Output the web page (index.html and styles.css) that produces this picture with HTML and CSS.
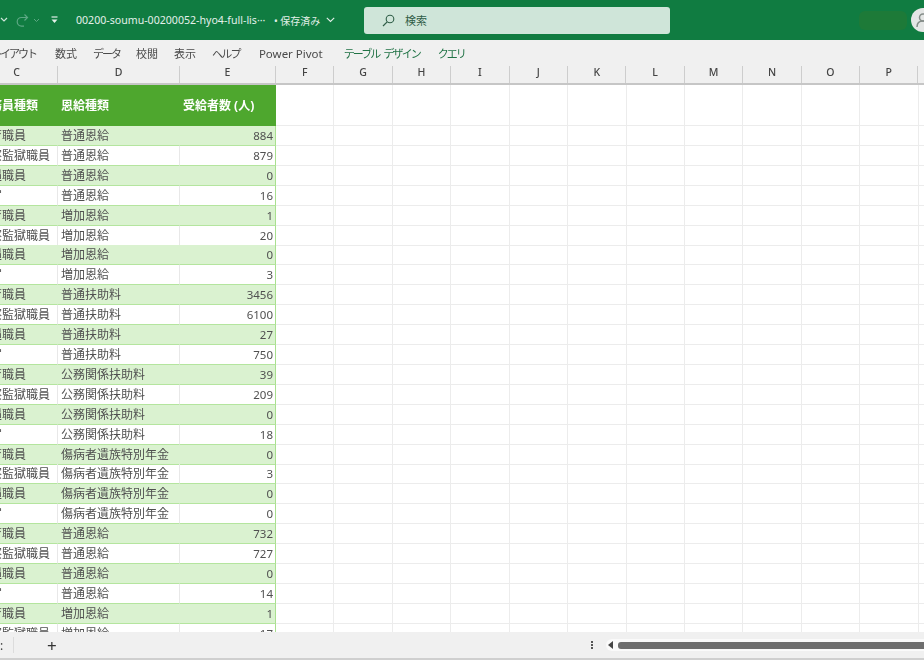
FILE: index.html
```html
<!DOCTYPE html>
<html lang="ja">
<head>
    <meta charset="UTF-8">
    <meta name="viewport" content="width=device-width, initial-scale=1.0">
    <title>00200-soumu-00200052-hyo4-full-list</title>
    <link rel="stylesheet" href="styles.css">
</head>
<body>
<div class="app">
    <!-- Title bar -->
    <header class="titlebar">
        <div class="qat">
            <svg class="chev-left" width="8" height="6" viewBox="0 0 8 6"><path d="M1 1l3 3 3-3" fill="none" stroke="#cfe5d9" stroke-width="1.2"/></svg>
            <svg class="redo" width="14" height="14" viewBox="0 0 14 14"><path d="M9.500 1.500l3 3-3 3M12 4.500H6.500a4.300 4.300 0 0 0 0 8.600H9" fill="none" stroke="#5da884" stroke-width="1.200"/></svg>
            <svg class="chev-mid" width="7" height="5" viewBox="0 0 7 5"><path d="M1 1l2.500 2.500L6 1" fill="none" stroke="#5da884" stroke-width="1"/></svg>
            <svg class="qat-more" width="7" height="8" viewBox="0 0 7 8"><path d="M.5 1h6" stroke="#e3f0e9" stroke-width="1.200"/><path d="M.5 3.500h6l-3 3.500z" fill="#e3f0e9"/></svg>
        </div>
        <div class="doc-name">00200-soumu-00200052-hyo4-full-lis···</div>
        <div class="saved">• 保存済み</div>
        <svg class="saved-chev" width="9" height="6" viewBox="0 0 9 6"><path d="M.8.800l3.700 3.700L8.200.800" fill="none" stroke="#e3f0e9" stroke-width="1.100"/></svg>
        <div class="search">
            <svg width="13" height="13" viewBox="0 0 13 13"><circle cx="8" cy="5" r="3.800" fill="none" stroke="#2f5d47" stroke-width="1.100"/><path d="M5.200 7.800L1 12" stroke="#2f5d47" stroke-width="1.200"/></svg>
            <span>検索</span>
        </div>
        <div class="blob"></div>
        <div class="avatar">
            <svg width="24" height="24" viewBox="0 0 24 24"><circle cx="12" cy="9.500" r="3.500" fill="none" stroke="#858d89" stroke-width="1.500"/><path d="M6 19c0-4 2.500-6 6-6s6 2 6 6" fill="none" stroke="#858d89" stroke-width="1.500"/></svg>
        </div>
    </header>

    <!-- Ribbon tabs -->
    <nav class="tabs">
        <span class="tab tab-cut kana">レイアウト</span>
        <span class="tab">数式</span>
        <span class="tab kana">データ</span>
        <span class="tab">校閲</span>
        <span class="tab">表示</span>
        <span class="tab kana-help">ヘルプ</span>
        <span class="tab tab-wide">Power Pivot</span>
        <span class="tab tab-green kana-design">テーブル デザイン</span>
        <span class="tab tab-green kana">クエリ</span>
    </nav>

    <!-- Column letters -->
    <div class="col-heads">
        <div>C</div><div>D</div><div>E</div><div>F</div><div>G</div><div>H</div><div>I</div><div>J</div><div>K</div><div>L</div><div>M</div><div>N</div><div>O</div><div>P</div><div></div>
    </div>

    <!-- Sheet -->
    <main class="sheet">
        <div class="row row-head"><div class="cell">公務員種類</div><div class="cell">恩給種類</div><div class="cell num">受給者数 (人)</div><div class="blank"></div></div>
        <div class="row band"><div class="cell">教育職員</div><div class="cell">普通恩給</div><div class="cell num">884</div><div class="blank"></div></div>
        <div class="row"><div class="cell">警察監獄職員</div><div class="cell">普通恩給</div><div class="cell num">879</div><div class="blank"></div></div>
        <div class="row band"><div class="cell">待遇職員</div><div class="cell">普通恩給</div><div class="cell num">0</div><div class="blank"></div></div>
        <div class="row"><div class="cell">文官</div><div class="cell">普通恩給</div><div class="cell num">16</div><div class="blank"></div></div>
        <div class="row band"><div class="cell">教育職員</div><div class="cell">増加恩給</div><div class="cell num">1</div><div class="blank"></div></div>
        <div class="row"><div class="cell">警察監獄職員</div><div class="cell">増加恩給</div><div class="cell num">20</div><div class="blank"></div></div>
        <div class="row band"><div class="cell">待遇職員</div><div class="cell">増加恩給</div><div class="cell num">0</div><div class="blank"></div></div>
        <div class="row"><div class="cell">文官</div><div class="cell">増加恩給</div><div class="cell num">3</div><div class="blank"></div></div>
        <div class="row band"><div class="cell">教育職員</div><div class="cell">普通扶助料</div><div class="cell num">3456</div><div class="blank"></div></div>
        <div class="row"><div class="cell">警察監獄職員</div><div class="cell">普通扶助料</div><div class="cell num">6100</div><div class="blank"></div></div>
        <div class="row band"><div class="cell">待遇職員</div><div class="cell">普通扶助料</div><div class="cell num">27</div><div class="blank"></div></div>
        <div class="row"><div class="cell">文官</div><div class="cell">普通扶助料</div><div class="cell num">750</div><div class="blank"></div></div>
        <div class="row band"><div class="cell">教育職員</div><div class="cell">公務関係扶助料</div><div class="cell num">39</div><div class="blank"></div></div>
        <div class="row"><div class="cell">警察監獄職員</div><div class="cell">公務関係扶助料</div><div class="cell num">209</div><div class="blank"></div></div>
        <div class="row band"><div class="cell">待遇職員</div><div class="cell">公務関係扶助料</div><div class="cell num">0</div><div class="blank"></div></div>
        <div class="row"><div class="cell">文官</div><div class="cell">公務関係扶助料</div><div class="cell num">18</div><div class="blank"></div></div>
        <div class="row band"><div class="cell">教育職員</div><div class="cell">傷病者遺族特別年金</div><div class="cell num">0</div><div class="blank"></div></div>
        <div class="row"><div class="cell">警察監獄職員</div><div class="cell">傷病者遺族特別年金</div><div class="cell num">3</div><div class="blank"></div></div>
        <div class="row band"><div class="cell">待遇職員</div><div class="cell">傷病者遺族特別年金</div><div class="cell num">0</div><div class="blank"></div></div>
        <div class="row"><div class="cell">文官</div><div class="cell">傷病者遺族特別年金</div><div class="cell num">0</div><div class="blank"></div></div>
        <div class="row band"><div class="cell">教育職員</div><div class="cell">普通恩給</div><div class="cell num">732</div><div class="blank"></div></div>
        <div class="row"><div class="cell">警察監獄職員</div><div class="cell">普通恩給</div><div class="cell num">727</div><div class="blank"></div></div>
        <div class="row band"><div class="cell">待遇職員</div><div class="cell">普通恩給</div><div class="cell num">0</div><div class="blank"></div></div>
        <div class="row"><div class="cell">文官</div><div class="cell">普通恩給</div><div class="cell num">14</div><div class="blank"></div></div>
        <div class="row band"><div class="cell">教育職員</div><div class="cell">増加恩給</div><div class="cell num">1</div><div class="blank"></div></div>
        <div class="row"><div class="cell">警察監獄職員</div><div class="cell">増加恩給</div><div class="cell num">17</div><div class="blank"></div></div>
    </main>

    <!-- Sheet tabs and scrollbar -->
    <footer class="statusbar">
        <span class="sheet-more">:</span>
        <span class="sep"></span>
        <span class="add">+</span>
        <span class="dots"></span>
        <div class="scroll">
            <span class="arrow"></span>
            <span class="thumb"></span>
        </div>
    </footer>
</div>
</body>
</html>
```

FILE: styles.css
```css
/* General Reset */
* {
    margin: 0;
    padding: 0;
    box-sizing: border-box;
}

body {
    background: #fff;
    font-family: "Noto Sans", "Noto Sans CJK JP", sans-serif;
    overflow: hidden;
}

.app {
    width: 924px;
    height: 660px;
    display: flex;
    flex-direction: column;
    overflow: hidden;
    filter: blur(0.7px);
}

/* Title bar */
.titlebar {
    height: 40px;
    flex: none;
    background: #107c41;
    color: #e3f0e9;
    display: flex;
    align-items: center;
    font-size: 10px;
    overflow: hidden;
}

.qat {
    width: 76px;
    flex: none;
    display: flex;
    align-items: center;
}

.redo {
    margin-left: 7px;
}

.chev-mid {
    margin-left: 4px;
}

.qat-more {
    margin-left: 11px;
}

.doc-name {
    width: 198px;
    flex: none;
    white-space: nowrap;
    font-size: 10.600px;
}

.saved {
    width: 52px;
    flex: none;
    white-space: nowrap;
}

.saved-chev {
    flex: none;
}

.search {
    width: 306px;
    height: 27px;
    flex: none;
    margin-left: 29px;
    background: #cfe5d9;
    border-radius: 3px;
    color: #2f5d47;
    display: flex;
    align-items: center;
    gap: 10px;
    padding-left: 18px;
    font-size: 11px;
}

.blob {
    width: 48px;
    height: 19px;
    flex: none;
    margin-left: 189px;
    background: #1d7a38;
    border-radius: 6px;
}

.avatar {
    width: 24px;
    height: 24px;
    flex: none;
    margin-left: 4px;
    background: #e4e6e5;
    border-radius: 50%;
    overflow: hidden;
}

/* Ribbon tabs */
.tabs {
    height: 26px;
    flex: none;
    background: #f0f0f0;
    display: flex;
    align-items: center;
    font-size: 11px;
    color: #4a4a4a;
    gap: 16px;
    white-space: nowrap;
}

.tab {
    flex: none;
}

.tab-cut {
    margin: 0 3px 0 -9px;
}

.kana {
    letter-spacing: -2px;
}

.kana-help {
    letter-spacing: -1.700px;
}

.kana-design {
    letter-spacing: -1.900px;
    word-spacing: 3px;
}

.tab-wide {
    margin-left: 3px;
    font-size: 11.500px;
}

.tab-green {
    color: #217346;
}

.tab-wide + .tab-green {
    margin-left: 5px;
}

.tab-green + .tab-green {
    margin-left: 2px;
}

/* Column letters */
.col-heads {
    height: 19px;
    flex: none;
    margin-left: -26px;
    width: 960px;
    background: #f0f0f0;
    border-bottom: 2px solid #c6c6c6;
    display: grid;
    grid-template-columns: 84px 122px 96px repeat(12, 58.420px);
    font-size: 10.500px;
    font-weight: 500;
    color: #444;
}

.col-heads div {
    text-align: center;
    line-height: 13px;
    border-right: 1px solid #cdcdcd;
}

.col-heads div:first-child {
    padding-left: 2px;
}

/* Sheet */
.sheet {
    flex: 1;
    margin-left: -26px;
    overflow: hidden;
    font-size: 12px;
    color: #505050;
}

.row {
    display: grid;
    grid-template-columns: 84px 122px 96px 1fr;
    height: 19.920px;
}

.cell {
    padding: 1px 0 0 3px;
    line-height: 18px;
    white-space: nowrap;
    border-bottom: 1px solid #b4e59e;
    border-right: 1px solid #e8e8e8;
}

.cell:first-child {
    padding-left: 4px;
}

.cell.num {
    text-align: right;
    padding-right: 2px;
    font-size: 11.500px;
    border-right: 1px solid #a9e08f;
}

.band .cell {
    background: #daf2d0;
    border-right-color: #daf2d0;
}

.band .cell.num {
    border-right-color: #a9e08f;
}

.row-head {
    height: 41px;
}

.row-head .cell {
    background: #4ea72e;
    color: #fff;
    font-weight: 700;
    line-height: 39px;
    border-color: #4ea72e;
}

.row-head .cell.num {
    font-size: 12px;
    padding-right: 21px;
}

.blank {
    border-bottom: 1px solid #ececec;
    background: repeating-linear-gradient(90deg, transparent 0, transparent 57.420px, #ececec 57.420px, #ececec 58.420px);
}

/* Sheet tabs and scrollbar */
.statusbar {
    height: 28px;
    flex: none;
    background: #f0f0f0;
    border-bottom: 2px solid #cfcfcf;
    display: flex;
    align-items: center;
    color: #444;
    overflow: hidden;
}

.sheet-more {
    width: 13px;
    flex: none;
    font-size: 12px;
}

.sep {
    width: 1px;
    height: 16px;
    flex: none;
    background: #dcdcdc;
}

.add {
    margin-left: 33px;
    width: 14px;
    flex: none;
    font-size: 17px;
    line-height: 1;
    color: #333;
}

.dots {
    width: 2px;
    height: 2px;
    flex: none;
    margin-left: 530px;
    background: #555;
    box-shadow: 0 -3px 0 #555, 0 3px 0 #555;
}

.scroll {
    width: 340px;
    height: 12px;
    flex: none;
    margin-left: 13px;
    background: #fafafa;
    border-radius: 6px 0 0 6px;
    display: flex;
    align-items: center;
    padding-left: 2px;
}

.arrow {
    width: 0;
    height: 0;
    flex: none;
    border-top: 4px solid transparent;
    border-bottom: 4px solid transparent;
    border-right: 5px solid #444;
}

.thumb {
    flex: 1;
    height: 7px;
    margin-left: 5px;
    background: #6e6e6e;
    border-radius: 3px 0 0 3px;
}
```
